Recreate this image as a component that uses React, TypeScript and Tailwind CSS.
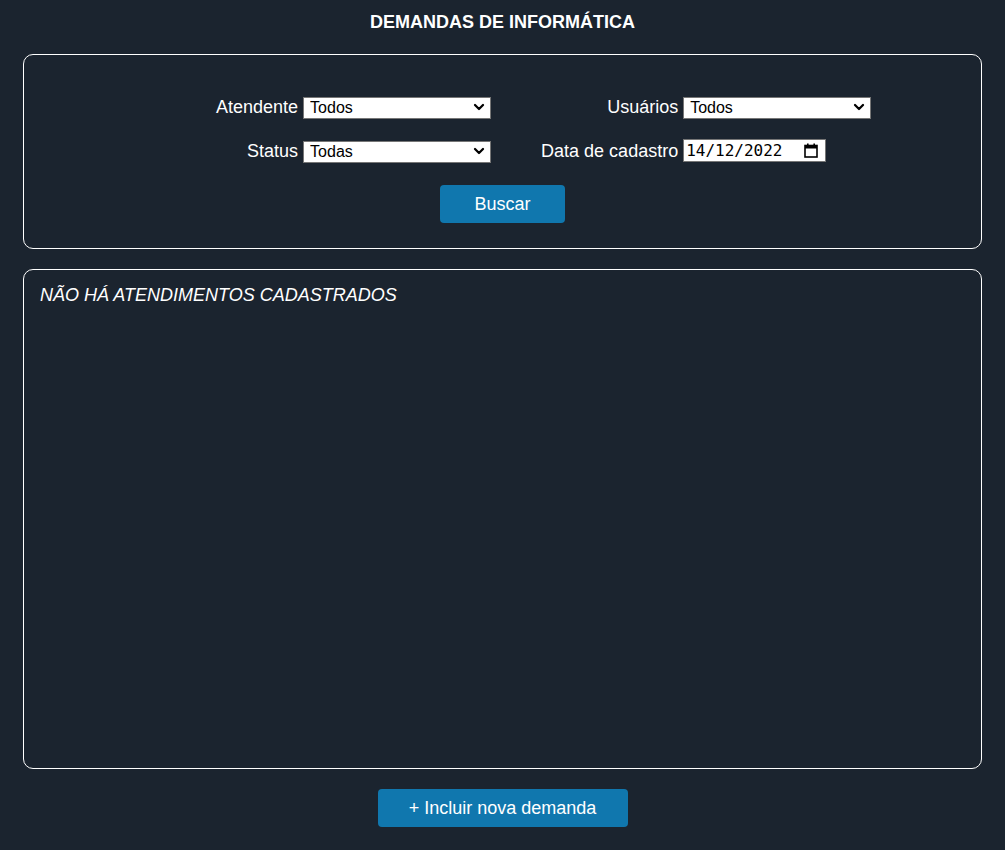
import { ChevronDown } from "lucide-react";

const atendentes = ["Todos"];
const usuarios = ["Todos"];
const statusList = ["Todas"];

function Select({ options }: { options: string[] }) {
  return (
    <div className="relative w-[188px] h-[22px]">
      <select className="appearance-none w-full h-full bg-white text-black text-[16px] leading-[20px] pl-[6px] border border-[#767676] rounded-none">
        {options.map((o) => (
          <option key={o}>{o}</option>
        ))}
      </select>
      <ChevronDown
        size={16}
        strokeWidth={3.4}
        className="absolute right-[4px] top-[3px] text-black pointer-events-none"
      />
    </div>
  );
}

function CalendarIcon() {
  return (
    <svg width="14" height="15" viewBox="0 0 14 15" className="text-black">
      <rect x="1" y="2.5" width="12" height="11.5" fill="none" stroke="currentColor" strokeWidth="1.6" />
      <rect x="1" y="2.5" width="12" height="3" fill="currentColor" />
      <rect x="3" y="0.5" width="1.6" height="3" fill="currentColor" />
      <rect x="9.4" y="0.5" width="1.6" height="3" fill="currentColor" />
    </svg>
  );
}

export default function App() {
  return (
    <div className="min-h-[850px] bg-[#1b242f] text-white font-['Liberation_Sans',Arial,sans-serif] px-[23px] pt-[12px] pb-[23px]">
      {/* Título */}
      <h1 className="text-center text-[18px] leading-[21px] font-bold">DEMANDAS DE INFORMÁTICA</h1>

      {/* Filtros */}
      <div className="mt-[21px] border border-white rounded-[10px] pt-[41px] h-[195px]">
        <div className="ml-[192px] w-fit grid grid-cols-[auto_188px_auto_188px] gap-x-[5px] gap-y-[21px] items-center">
          <label className="text-right text-[18px] leading-[22px]">Atendente</label>
          <Select options={atendentes} />
          <label className="text-right text-[18px] leading-[22px] pl-[45px]">Usuários</label>
          <Select options={usuarios} />

          <label className="text-right text-[18px] leading-[22px]">Status</label>
          <Select options={statusList} />
          <label className="text-right text-[18px] leading-[22px] pl-[45px]">Data de cadastro</label>
          <div className="w-[143px] h-[23px] bg-white text-black border border-[#767676] flex items-center pl-[2px] pr-[7px] justify-between">
            <span className="font-['DejaVu_Sans_Mono',monospace] text-[16px] leading-[20px]">14/12/2022</span>
            <CalendarIcon />
          </div>
        </div>
        <div className="flex justify-center mt-[23px]">
          <button className="w-[125px] h-[38px] rounded-[4px] bg-[#1077ae] text-white text-[18px]">Buscar</button>
        </div>
      </div>

      {/* Lista */}
      <div className="mt-[20px] border border-white rounded-[10px] h-[500px] px-[16px] pt-[14px]">
        <p className="italic text-[18px] leading-[22px]">NÃO HÁ ATENDIMENTOS CADASTRADOS</p>
      </div>

      <div className="flex justify-center mt-[20px]">
        <button className="w-[250px] h-[38px] rounded-[4px] bg-[#1077ae] text-white text-[18px]">+ Incluir nova demanda</button>
      </div>
    </div>
  );
}
